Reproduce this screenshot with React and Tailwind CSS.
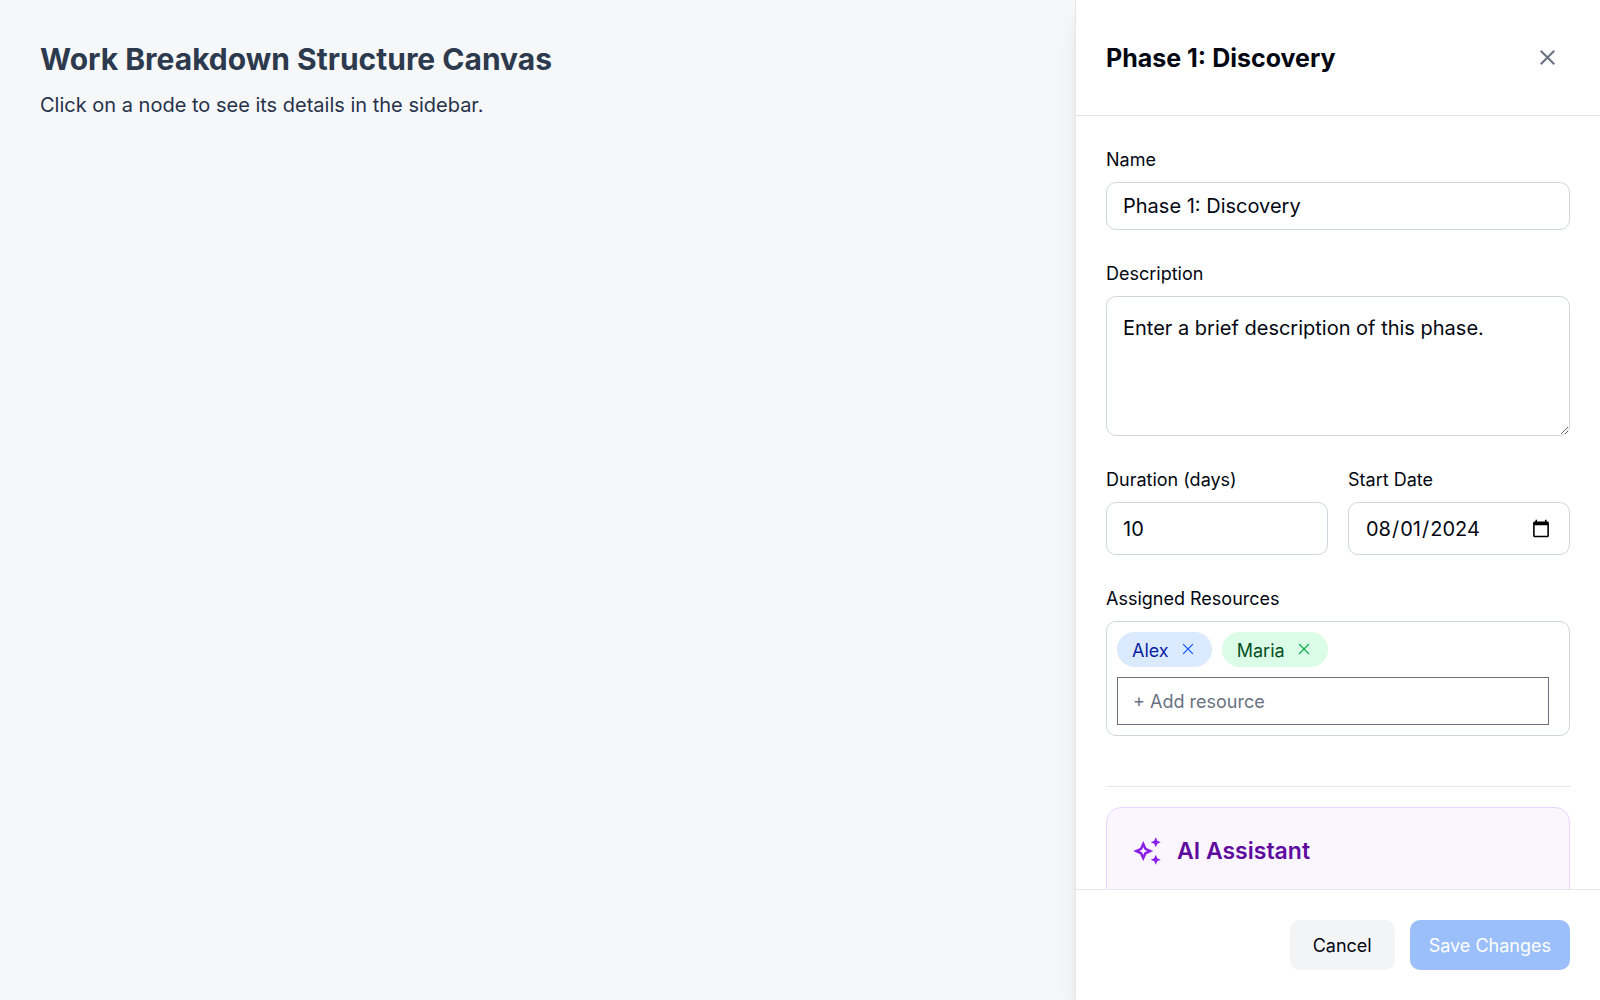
import { useState } from "react";

function CloseIcon({ className }) {
  return (
    <svg viewBox="0 0 24 24" className={className} fill="none" stroke="currentColor" aria-hidden="true">
      <path d="M5.5 5.5 18.5 18.5M18.5 5.5 5.5 18.5" />
    </svg>
  );
}

function SparkleIcon({ className }) {
  return (
    <svg viewBox="0 0 24 24" className={className} fill="currentColor" aria-hidden="true">
      <path d="m19 9-1.25-2.75L15 5l2.75-1.25L19 1l1.25 2.75L23 5l-2.75 1.25L19 9Zm0 14-1.25-2.75L15 19l2.75-1.25L19 15l1.25 2.75L23 19l-2.75 1.25L19 23ZM9 20l-2.5-5.5L1 12l5.5-2.5L9 4l2.5 5.5L17 12l-5.5 2.5L9 20Zm0-4.85L10 13l2.15-1L10 11 9 8.85 8 11l-2.15 1L8 13l1 2.15Z" />
    </svg>
  );
}

function Field({ label, htmlFor, children }) {
  return (
    <div className="flex min-w-0 flex-col gap-2">
      <label htmlFor={htmlFor} className="text-[18px] leading-7">
        {label}
      </label>
      {children}
    </div>
  );
}

function Chip({ name, className, iconClassName, onRemove }) {
  return (
    <span className={"flex h-[35px] items-center gap-[10px] rounded-full px-[15px] text-[18px] " + className}>
      <span className="pt-[2px]">{name}</span>
      <button type="button" aria-label={"Remove " + name} onClick={onRemove} className={"pb-[2px] " + iconClassName}>
        <CloseIcon className="size-[18px] stroke-[1.8]" />
      </button>
    </span>
  );
}

const RESOURCES = [
  { name: "Alex", chip: "bg-blue-100 text-[#0a1fa0]", icon: "text-blue-600" },
  { name: "Maria", chip: "bg-green-100 text-[#045020]", icon: "text-green-600" },
];

export default function App() {
  const [resources, setResources] = useState(RESOURCES);

  return (
    <div className="flex h-screen bg-[#f6f7f9] font-['Inter',sans-serif] text-gray-950">
      <main className="min-w-0 flex-1 p-10">
        <h1 className="text-[30px] leading-[38px] font-bold text-[#2d3a4d]">Work Breakdown Structure Canvas</h1>
        <p className="mt-3 text-[20px] leading-[30px] text-[#26324a]">
          Click on a node to see its details in the sidebar.
        </p>
      </main>

      <aside className="flex w-[525px] shrink-0 flex-col border-l border-gray-200 bg-white shadow-xl">
        <header className="flex items-center justify-between border-b border-gray-200 p-[30px]">
          <h2 className="text-[25px] leading-8 font-bold">Phase 1: Discovery</h2>
          <button type="button" aria-label="Close" className="flex h-[55px] w-[45px] items-center justify-center text-gray-500">
            <CloseIcon className="size-[25px] stroke-[2]" />
          </button>
        </header>

        <form id="node-form" className="min-h-0 flex-1 overflow-y-auto p-[30px] [scrollbar-width:none]">
          <div className="flex flex-col gap-[30px]">
            <Field label="Name" htmlFor="name">
              <input id="name" type="text" defaultValue="Phase 1: Discovery" className="h-12 w-full rounded-[10px] border border-gray-300 px-4 text-[20px]" />
            </Field>
            <Field label="Description" htmlFor="description">
              <textarea id="description" defaultValue="Enter a brief description of this phase." className="h-[140px] w-full rounded-[10px] border border-gray-300 p-4 text-[20px] leading-[30px]" />
            </Field>
            <div className="grid grid-cols-2 gap-5">
              <Field label="Duration (days)" htmlFor="duration">
                <input id="duration" type="number" defaultValue="10" className="h-[53px] w-full rounded-[10px] border border-gray-300 px-4 text-[20px]" />
              </Field>
              <Field label="Start Date" htmlFor="start-date">
                <input id="start-date" type="date" defaultValue="2024-08-01" className="h-[53px] w-full rounded-[10px] border border-gray-300 px-4 text-[20px]" />
              </Field>
            </div>
            <Field label="Assigned Resources" htmlFor="resource">
              <div className="flex flex-wrap gap-[10px] rounded-[10px] border border-gray-300 p-[10px]">
                {resources.map((r) => (
                  <Chip
                    key={r.name}
                    name={r.name}
                    className={r.chip}
                    iconClassName={r.icon}
                    onRemove={() => setResources(resources.filter((x) => x !== r))}
                  />
                ))}
                <input id="resource" type="text" placeholder="+ Add resource" className="mr-[10px] h-12 w-full border border-gray-500 px-[15px] text-[18px] placeholder:text-gray-500" />
              </div>
            </Field>
          </div>

          <div className="mt-[50px] border-t border-gray-200 pt-5">
            <section className="min-h-[200px] rounded-[15px] border border-purple-200 bg-purple-50 p-[25px]">
              <h3 className="flex items-center gap-[15px] text-[23px] leading-9 font-semibold text-[#5e0c9e]">
                <SparkleIcon className="size-[30px] text-[#8a1fe8]" />
                AI Assistant
              </h3>
            </section>
          </div>
        </form>

        <footer className="flex justify-end gap-[15px] border-t border-gray-200 p-[30px]">
          <button type="button" className="h-[50px] rounded-[10px] bg-gray-100 px-[23px] text-[18px]">
            Cancel
          </button>
          <button type="submit" form="node-form" disabled className="h-[50px] rounded-[10px] bg-[#9bbffa] px-[19px] text-[18px] text-white">
            Save Changes
          </button>
        </footer>
      </aside>
    </div>
  );
}
